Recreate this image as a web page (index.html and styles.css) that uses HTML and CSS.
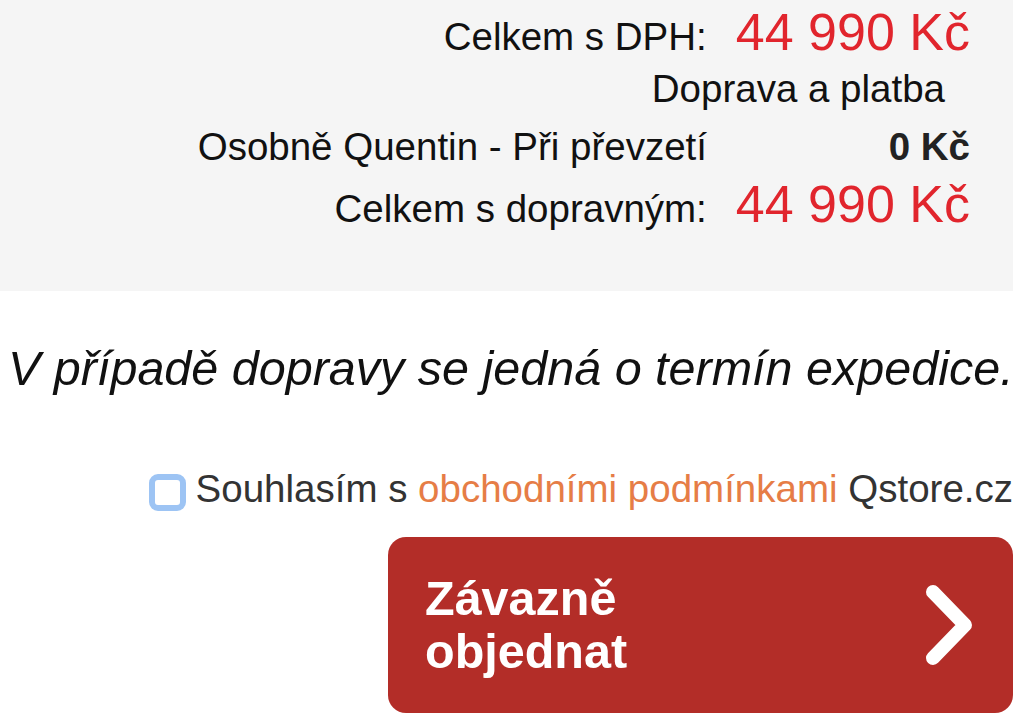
FILE: index.html
```html
<!DOCTYPE html>
<html lang="cs">
	<head>
		<meta charset="UTF-8">
		<meta name="viewport" content="width=device-width,initial-scale=1">
		<title>Shrnutí objednávky</title>
		<link rel="stylesheet" href="styles.css">
	</head>
	<body>
		<div class="page">
			<section class="summary">
				<div class="summary__row summary__row--total">
					<span class="summary__label">Celkem s DPH:</span>
					<span class="summary__price">44 990 Kč</span>
				</div>
				<div class="summary__row summary__row--head">
					<span class="summary__heading">Doprava a platba</span>
				</div>
				<div class="summary__row">
					<span class="summary__label">Osobně Quentin - Při převzetí</span>
					<span class="summary__value">0 Kč</span>
				</div>
				<div class="summary__row summary__row--total">
					<span class="summary__label">Celkem s dopravným:</span>
					<span class="summary__price">44 990 Kč</span>
				</div>
			</section>
			<p class="note">V případě dopravy se jedná o termín expedice.</p>
			<label class="terms">
				<input type="checkbox" class="terms__check">
				<span class="terms__text">Souhlasím s <a class="terms__link" href="#">obchodními podmínkami</a> Qstore.cz</span>
			</label>
			<div class="actions">
				<button type="button" class="order-btn">
					<span class="order-btn__text">Závazně<br>objednat</span>
					<svg class="order-btn__arrow" width="58" height="90" viewBox="0 0 58 90">
						<polyline points="12,12 44,45 12,78" fill="none" stroke="#fff" stroke-width="14" stroke-linecap="round" stroke-linejoin="round"/>
					</svg>
				</button>
			</div>
		</div>
	</body>
</html>
```

FILE: styles.css
```css
body
{
	margin: 0;
	background: #fff;
	font-family: 'Liberation Sans', Arial, sans-serif;
	color: #111;
}

.page
{
	padding-right: 10px;
}

/* souhrn ceny */
.summary
{
	height: 291px;
	box-sizing: border-box;
	padding: 6px 43px 0 0;
	background-color: #f5f5f5;
}

.summary__row
{
	display: flex;
	justify-content: flex-end;
	align-items: baseline;
	line-height: 1;
	margin-top: 12px;
	white-space: nowrap;
}

.summary__row:first-child
{
	margin-top: 0;
}

.summary__row--head
{
	margin-bottom: 19px;
}

.summary__label,
.summary__heading
{
	font-size: 38.5px;
}

.summary__label
{
	margin-right: 29px;
}

.summary__heading
{
	padding-right: 25px;
}

.summary__price,
.summary__value
{
	min-width: 234px;
	text-align: right;
}

.summary__price
{
	font-size: 52px;
	color: #e1252d;
}

.summary__value
{
	font-size: 38.5px;
	font-weight: bold;
	color: #222;
}

.note
{
	margin: 53px 0 0 8px;
	font-size: 48.5px;
	font-style: italic;
	line-height: 1;
	white-space: nowrap;
}

/* obchodní podmínky */
.terms
{
	display: flex;
	justify-content: flex-end;
	align-items: center;
	gap: 10px;
	margin-top: 75px;
	font-size: 38.5px;
	line-height: 1;
	color: #333;
}

.terms__check
{
	appearance: none;
	width: 37px;
	height: 37px;
	margin: 6px 0 0 0;
	box-sizing: border-box;
	border: 6px solid #9dc4f4;
	border-radius: 9px;
	background: #fff;
}

.terms__link
{
	color: #e67d46;
	text-decoration: none;
}

.actions
{
	display: flex;
	justify-content: flex-end;
	margin-top: 26px;
}

.order-btn
{
	display: flex;
	align-items: center;
	justify-content: space-between;
	width: 625px;
	height: 176px;
	padding: 0 34px 0 37px;
	box-sizing: border-box;
	border: 0;
	border-radius: 18px;
	background-color: #b32d28;
	color: #fff;
	font-family: 'Liberation Sans', Arial, sans-serif;
	font-size: 48.5px;
	font-weight: bold;
	line-height: 53px;
	text-align: left;
	cursor: pointer;
}

.order-btn__arrow
{
	display: block;
}
```
